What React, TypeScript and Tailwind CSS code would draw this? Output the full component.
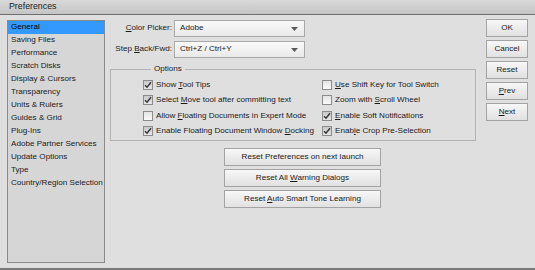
import type { ReactNode } from "react"

const font = { fontFamily: '"Liberation Sans", Arial, sans-serif' }

const categories = [
  "General",
  "Saving Files",
  "Performance",
  "Scratch Disks",
  "Display & Cursors",
  "Transparency",
  "Units & Rulers",
  "Guides & Grid",
  "Plug-Ins",
  "Adobe Partner Services",
  "Update Options",
  "Type",
  "Country/Region Selection",
]

function U({ children }: { children: ReactNode }) {
  return <span className="underline underline-offset-[1px]">{children}</span>
}

function Select({ value }: { value: string }) {
  return (
    <div className="flex h-[17px] w-[131px] items-center justify-between border border-[#a9a9a9] bg-gradient-to-b from-[#fafafa] to-[#e9e9e9] pl-[5px] pr-[6px]">
      <span>{value}</span>
      <svg width="7" height="4" viewBox="0 0 7 4">
        <path d="M0 0h7L3.5 4z" fill="#5a5a5a" />
      </svg>
    </div>
  )
}

function Button({ children }: { children: ReactNode }) {
  return (
    <div className="flex h-[18px] items-center justify-center border border-[#a3a3a3] bg-gradient-to-b from-[#f7f7f7] to-[#e1e1e1]">
      <span className="whitespace-pre">{children}</span>
    </div>
  )
}

function Check({ checked, children }: { checked: boolean; children: ReactNode }) {
  return (
    <div className="flex h-[15.5px] items-center gap-[3px]">
      <div
        className={`flex h-[10px] w-[10px] items-center justify-center border border-[#8c8c8c] bg-gradient-to-b ${
          checked ? "from-[#c9c9c9] to-[#e6e6e6]" : "from-[#e4e4e4] to-[#fafafa]"
        }`}
      >
        {checked && (
          <svg width="8" height="8" viewBox="0 0 8 8">
            <path d="M1 4.2l2 2L7 1.3" fill="none" stroke="#333" strokeWidth="1.4" />
          </svg>
        )}
      </div>
      <span className="whitespace-nowrap">{children}</span>
    </div>
  )
}

export default function App() {
  return (
    <div style={font} className="flex h-[270px] w-[535px] flex-col bg-[#dfdfdf] text-[8.1px] text-[#1a1a1a]">
      <div className="flex h-[15px] shrink-0 items-center border-b border-[#6f6f6f] bg-gradient-to-b from-[#d9d9d9] to-[#c4c4c4] pl-[9px] text-[8.8px] text-[#222]">
        Preferences
      </div>
      <div className="flex flex-1 border-b-2 border-[#7a7a7a] pl-[7px] pt-[5px] pb-[5px]">
        <div className="flex w-[98px] flex-col border border-[#8a8a8a] bg-[#d6d6d6]">
          {categories.map((c, i) => (
            <div
              key={c}
              className={`flex h-[13px] items-center whitespace-nowrap pl-[3px] ${i === 0 ? "bg-[#3399ff] text-black" : ""}`}
            >
              {c}
            </div>
          ))}
        </div>

        <div className="ml-[5px] flex w-[366px] flex-col">
          <div className="flex flex-col gap-[4px]">
            <div className="flex items-center">
              <div className="w-[64px] pr-[2px] text-right">
                <U>C</U>olor Picker:
              </div>
              <Select value="Adobe" />
            </div>
            <div className="flex items-center">
              <div className="w-[64px] pr-[2px] text-right">
                Step <U>B</U>ack/Fwd:
              </div>
              <Select value="Ctrl+Z / Ctrl+Y" />
            </div>
          </div>

          <fieldset className="mt-[6px] h-[77px] border border-[#b3b3b3] pl-[32px] pt-[3px]">
            <legend className="ml-[8px] px-[3px] leading-[10px]">Options</legend>
            <div className="flex">
              <div className="flex w-[179px] flex-col">
                <Check checked>
                  Show <U>T</U>ool Tips
                </Check>
                <Check checked>
                  Select <U>M</U>ove tool after committing text
                </Check>
                <Check checked={false}>
                  Allow <U>F</U>loating Documents in Expert Mode
                </Check>
                <Check checked>
                  Enable Floating Document Window <U>D</U>ocking
                </Check>
              </div>
              <div className="flex flex-col">
                <Check checked={false}>
                  <U>U</U>se Shift Key for Tool Switch
                </Check>
                <Check checked={false}>
                  Zoom with <U>S</U>croll Wheel
                </Check>
                <Check checked>
                  <U>E</U>nable Soft Notifications
                </Check>
                <Check checked>
                  Enab<U>l</U>e Crop Pre-Selection
                </Check>
              </div>
            </div>
          </fieldset>

          <div className="ml-[114px] mt-[7px] flex w-[157px] flex-col gap-[3px]">
            <Button>Reset Preferences on next launch</Button>
            <Button>
              Reset All <U>W</U>arning Dialogs
            </Button>
            <Button>
              Reset <U>A</U>uto Smart Tone Learning
            </Button>
          </div>
        </div>

        <div className="ml-[10px] flex w-[42px] flex-col gap-[3px] -mt-[1px]">
          <Button>OK</Button>
          <Button>Cancel</Button>
          <Button>Reset</Button>
          <Button>
            <U>P</U>rev
          </Button>
          <Button>
            <U>N</U>ext
          </Button>
        </div>
      </div>
    </div>
  )
}
